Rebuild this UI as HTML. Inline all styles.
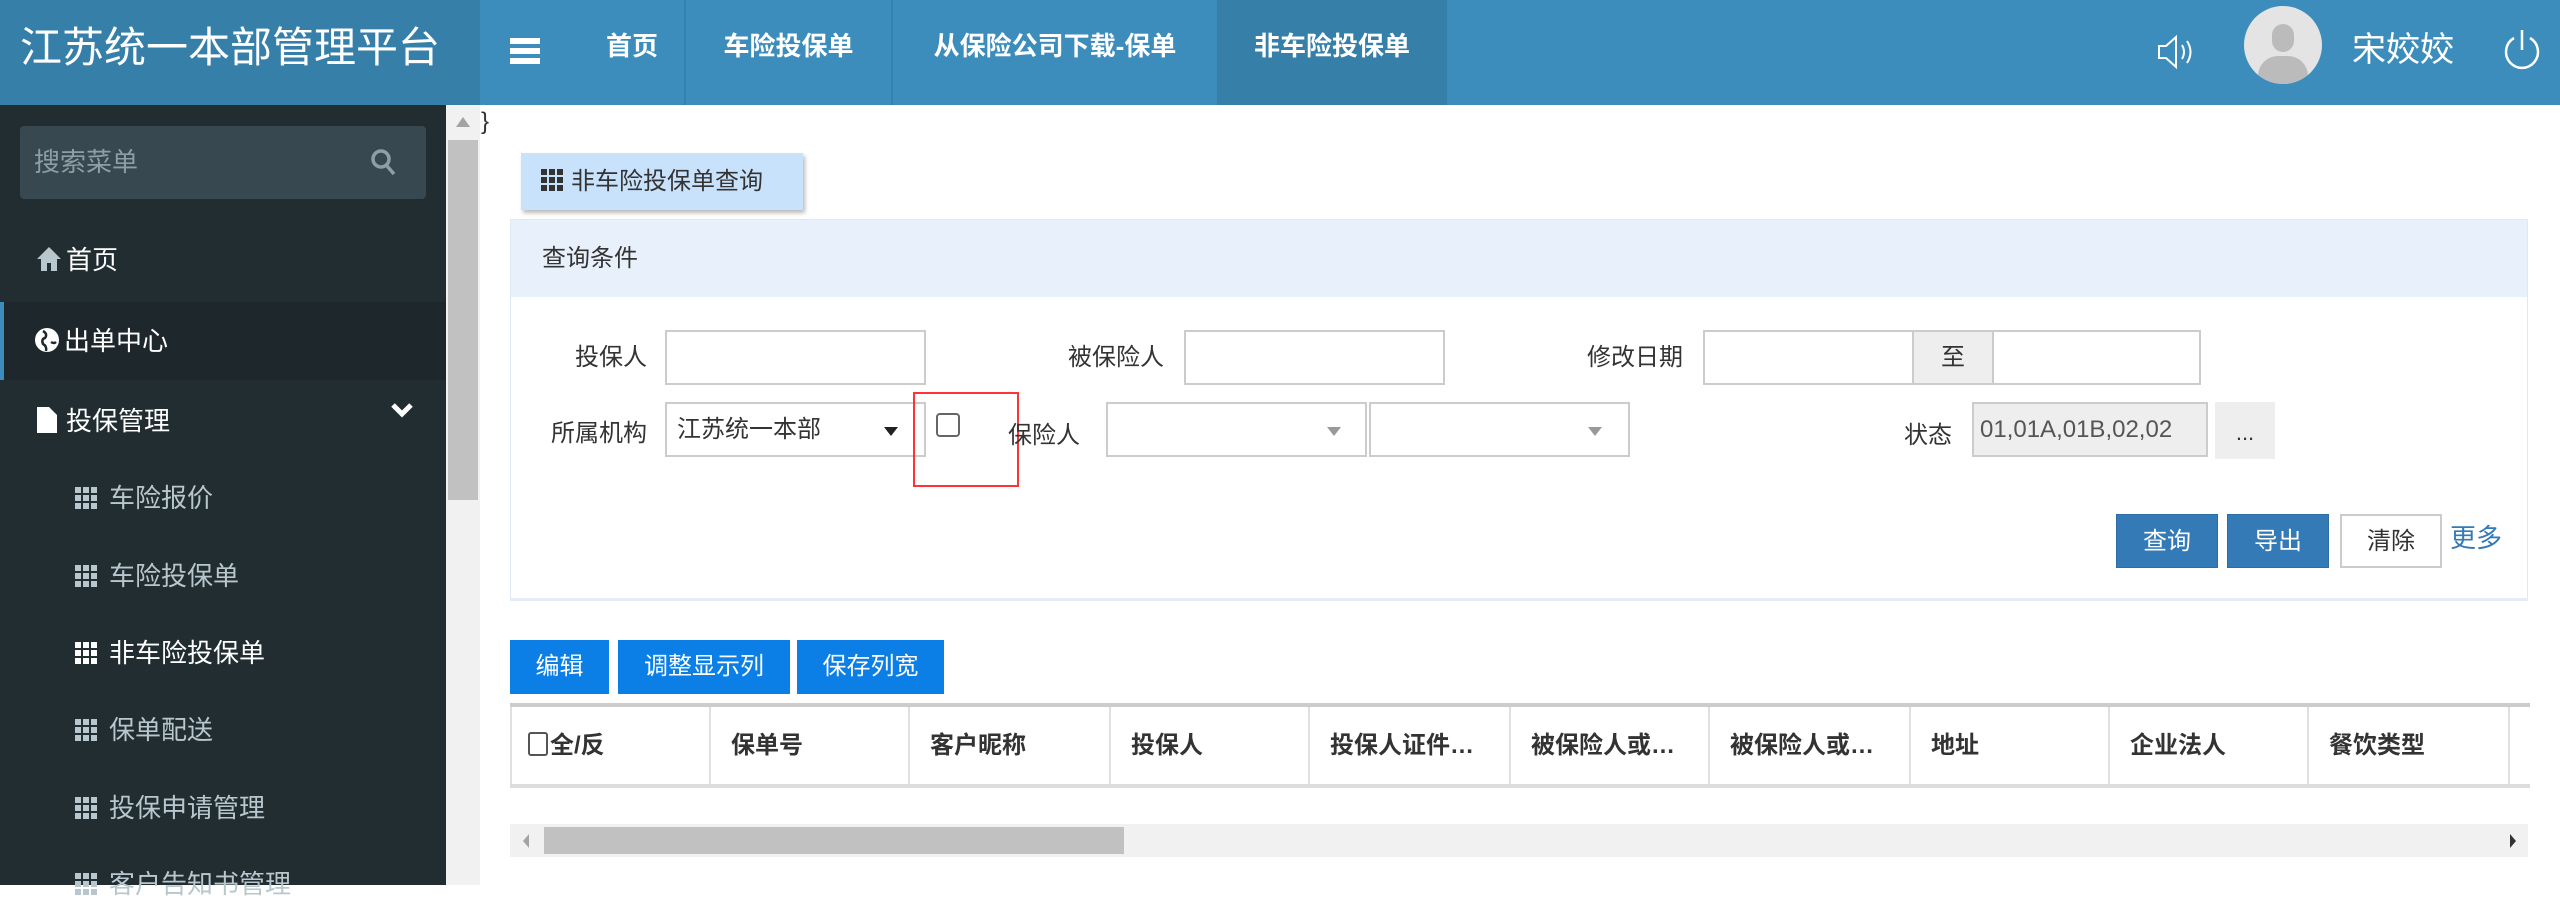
<!DOCTYPE html>
<html><head><meta charset="utf-8"><style>
*{box-sizing:border-box;margin:0;padding:0}
body{width:2560px;height:885px;overflow:hidden;background:#fff;font-family:"Liberation Sans","Noto Sans CJK SC",sans-serif;position:relative;color:#333}
.a{position:absolute}
.hdr{left:0;top:0;width:2560px;height:105px;background:#3c8dbc}
.logo{left:0;top:0;width:480px;height:105px;background:#367fa9;color:#fff;font-size:42px;line-height:95px;padding-left:20px}
.nav{top:0;height:105px;line-height:92px;color:#fff;font-size:26px;font-weight:bold;text-align:center}
.div{top:0;width:2px;height:105px;background:#3581b0}
.side{left:0;top:105px;width:446px;height:780px;background:#222d32}
.mi{left:0;width:446px;color:#fff;font-size:26px;line-height:40px}
.sub{color:#b8c7ce;font-size:26px;left:75px;line-height:40px}
.g{display:inline-block;width:22px;height:22px;vertical-align:-2px;margin-right:12px;background:
linear-gradient(90deg,currentColor 0 6px,transparent 6px 8px,currentColor 8px 14px,transparent 14px 16px,currentColor 16px 22px);
-webkit-mask:linear-gradient(currentColor 0 6px,transparent 6px 8px,currentColor 8px 14px,transparent 14px 16px,currentColor 16px 22px)}
.lbl{font-size:24px;color:#333;line-height:55px;text-align:right}
.in{border:2px solid #ccc;background:#fff;height:55px}
.btn{font-size:24px;color:#fff;text-align:center}
.th{top:707px;height:77px;border-right:2px solid #e0e0e0;font-size:24px;font-weight:bold;line-height:77px;padding-left:20px;color:#333;white-space:nowrap;overflow:hidden}
.car{width:0;height:0;border-left:7px solid transparent;border-right:7px solid transparent;border-top:9px solid #999}
</style></head><body>
<div class="a hdr"></div>
<div class="a logo">江苏统一本部管理平台</div>
<div class="a" style="left:510px;top:38px;width:30px;height:6px;background:#fff;box-shadow:0 10px 0 #fff,0 20px 0 #fff"></div>
<div class="a nav" style="left:580px;width:104px">首页</div>
<div class="a div" style="left:684px"></div>
<div class="a nav" style="left:686px;width:205px">车险投保单</div>
<div class="a div" style="left:891px"></div>
<div class="a nav" style="left:893px;width:324px">从保险公司下载-保单</div>
<div class="a nav" style="left:1217px;width:230px;background:#367fa9">非车险投保单</div>
<svg class="a" style="left:2155px;top:30px" width="44" height="44" viewBox="0 0 44 44" fill="none" stroke="#fff" stroke-width="2"><path d="M4 16h7l10-9v30l-10-9H4z"/><path d="M27 15q4 7 0 14M32 11q7 11 0 22"/></svg>
<div class="a" style="left:2244px;top:6px;width:78px;height:78px;border-radius:50%;background:#e4e4e4;overflow:hidden"><div class="a" style="left:28px;top:18px;width:22px;height:28px;border-radius:11px;background:#bbb"></div><div class="a" style="left:14px;top:50px;width:50px;height:40px;border-radius:25px;background:#bbb"></div></div>
<div class="a" style="left:2352px;top:22px;color:#fff;font-size:34px">宋姣姣</div>
<svg class="a" style="left:2500px;top:26px" width="44" height="48" viewBox="0 0 44 48" fill="none" stroke="#fff" stroke-width="2.5"><path d="M14 12A16 16 0 1 0 30 12"/><path d="M22 4v20"/></svg>

<div class="a side"></div>
<div class="a" style="left:20px;top:126px;width:406px;height:73px;background:#374850;border-radius:4px;color:#8e9ea4;font-size:26px;line-height:73px;padding-left:14px">搜索菜单</div>
<svg class="a" style="left:370px;top:148px" width="28" height="30" viewBox="0 0 28 30" fill="none" stroke="#8e9ea4" stroke-width="3.5"><circle cx="11" cy="11" r="8"/><path d="M17 18l7 8"/></svg>
<div class="a mi" style="top:240px;padding-left:36px"><span style="display:inline-block;width:0;height:0"></span><svg width="26" height="26" viewBox="0 0 26 26" style="vertical-align:-3px;margin-right:4px"><path d="M13 1L1 13h4v12h6v-8h4v8h6V13h4z" fill="#b8c7ce"/></svg>首页</div>
<div class="a" style="left:0;top:302px;width:446px;height:78px;background:#1e282c;border-left:4px solid #3c8dbc"></div>
<div class="a mi" style="top:321px;padding-left:34px"><svg width="26" height="28" viewBox="0 0 26 28" style="vertical-align:-4px;margin-right:4px"><circle cx="13" cy="14" r="12" fill="#fff"/><path d="M9 5q5 3 2 7q-4 1-2 6q4 2 3 7M17 16q3 2 5 0" stroke="#1e282c" stroke-width="2.5" fill="none"/></svg>出单中心</div>
<div class="a mi" style="top:401px;padding-left:36px"><svg width="22" height="28" viewBox="0 0 22 28" style="vertical-align:-4px;margin-right:8px"><path d="M1 1h12l8 8v18H1z" fill="#fff"/></svg>投保管理</div>
<svg class="a" style="left:390px;top:402px" width="24" height="18" viewBox="0 0 24 18"><path d="M3 3l9 9 9-9" stroke="#fff" stroke-width="5" fill="none"/></svg>
<div class="a sub" style="top:478px"><span class="g"></span>车险报价</div>
<div class="a sub" style="top:556px"><span class="g"></span>车险投保单</div>
<div class="a sub" style="top:633px;color:#fff"><span class="g"></span>非车险投保单</div>
<div class="a sub" style="top:710px"><span class="g"></span>保单配送</div>
<div class="a sub" style="top:788px"><span class="g"></span>投保申请管理</div>
<div class="a sub" style="top:864px"><span class="g"></span>客户告知书管理</div>

<div class="a" style="left:446px;top:105px;width:34px;height:780px;background:#f1f1f1"></div>
<div class="a" style="left:448px;top:140px;width:30px;height:360px;background:#c1c1c1"></div>
<div class="a" style="left:456px;top:117px;width:0;height:0;border-left:7px solid transparent;border-right:7px solid transparent;border-bottom:10px solid #a3a3a3"></div>
<div class="a" style="left:481px;top:108px;font-size:24px;color:#333">}</div>

<div class="a" style="left:521px;top:153px;width:282px;height:57px;background:#c9e2fb;box-shadow:2px 3px 4px #bbb;font-size:24px;line-height:57px;padding-left:20px;color:#333"><span class="g" style="color:#333;margin-right:8px"></span>非车险投保单查询</div>

<div class="a" style="left:510px;top:219px;width:2018px;height:382px;border:1px solid #dfe9f4;border-bottom:3px solid #e4edf7"></div>
<div class="a" style="left:511px;top:220px;width:2016px;height:77px;background:#e8f1fb;font-size:24px;line-height:77px;padding-left:31px">查询条件</div>

<div class="a lbl" style="left:540px;top:330px;width:107px">投保人</div>
<div class="a in" style="left:665px;top:330px;width:261px"></div>
<div class="a lbl" style="left:1040px;top:330px;width:124px">被保险人</div>
<div class="a in" style="left:1184px;top:330px;width:261px"></div>
<div class="a lbl" style="left:1560px;top:330px;width:123px">修改日期</div>
<div class="a in" style="left:1703px;top:330px;width:211px"></div>
<div class="a in" style="left:1912px;top:330px;width:82px;background:#eee;text-align:center;font-size:24px;line-height:51px">至</div>
<div class="a in" style="left:1992px;top:330px;width:209px"></div>

<div class="a lbl" style="left:530px;top:406px;width:117px">所属机构</div>
<div class="a in" style="left:665px;top:402px;width:261px;font-size:24px;line-height:51px;padding-left:10px">江苏统一本部</div>
<div class="a car" style="left:884px;top:427px;border-top-color:#222"></div>
<div class="a" style="left:913px;top:392px;width:106px;height:95px;border:2px solid #f33"></div>
<div class="a" style="left:936px;top:413px;width:24px;height:24px;border:2px solid #666;border-radius:4px;background:#fff"></div>
<div class="a lbl" style="left:1008px;top:408px;width:80px;text-align:left">保险人</div>
<div class="a in" style="left:1106px;top:402px;width:261px"></div>
<div class="a car" style="left:1327px;top:427px"></div>
<div class="a in" style="left:1369px;top:402px;width:261px"></div>
<div class="a car" style="left:1588px;top:427px"></div>
<div class="a lbl" style="left:1890px;top:408px;width:62px">状态</div>
<div class="a in" style="left:1972px;top:402px;width:236px;background:#eee;font-size:24px;line-height:51px;padding-left:6px;color:#555">01,01A,01B,02,02</div>
<div class="a" style="left:2215px;top:402px;width:60px;height:57px;background:#eee;text-align:center;font-size:22px;line-height:62px">...</div>

<div class="a btn" style="left:2116px;top:514px;width:102px;height:54px;background:#337ab7;border:1px solid #2e6da4;line-height:54px">查询</div>
<div class="a btn" style="left:2227px;top:514px;width:102px;height:54px;background:#337ab7;border:1px solid #2e6da4;line-height:54px">导出</div>
<div class="a btn" style="left:2340px;top:514px;width:102px;height:54px;background:#fff;border:2px solid #ccc;color:#333;line-height:52px">清除</div>
<div class="a" style="left:2450px;top:518px;font-size:26px;color:#337ab7">更多</div>

<div class="a btn" style="left:510px;top:640px;width:99px;height:54px;background:#0b7fe5;line-height:54px">编辑</div>
<div class="a btn" style="left:618px;top:640px;width:172px;height:54px;background:#0b7fe5;line-height:54px">调整显示列</div>
<div class="a btn" style="left:797px;top:640px;width:147px;height:54px;background:#0b7fe5;line-height:54px">保存列宽</div>

<div class="a" style="left:510px;top:703px;width:2020px;height:4px;background:#ccc"></div>
<div class="a" style="left:510px;top:707px;width:2px;height:77px;background:#e0e0e0"></div>
<div class="a th" style="left:512px;width:199px;padding-left:16px"><span style="display:inline-block;width:20px;height:24px;border:2px solid #555;border-radius:3px;vertical-align:-3px;margin-right:2px"></span>全/反</div>
<div class="a th" style="left:711px;width:199px">保单号</div>
<div class="a th" style="left:910px;width:201px">客户昵称</div>
<div class="a th" style="left:1111px;width:199px">投保人</div>
<div class="a th" style="left:1310px;width:201px">投保人证件…</div>
<div class="a th" style="left:1511px;width:199px">被保险人或…</div>
<div class="a th" style="left:1710px;width:201px">被保险人或…</div>
<div class="a th" style="left:1911px;width:199px">地址</div>
<div class="a th" style="left:2110px;width:199px">企业法人</div>
<div class="a th" style="left:2309px;width:201px">餐饮类型</div>
<div class="a" style="left:510px;top:784px;width:2020px;height:4px;background:#ddd"></div>

<div class="a" style="left:510px;top:824px;width:2018px;height:33px;background:#f1f1f1"></div>
<div class="a" style="left:544px;top:827px;width:580px;height:27px;background:#c1c1c1"></div>
<div class="a" style="left:523px;top:834px;width:0;height:0;border-top:7px solid transparent;border-bottom:7px solid transparent;border-right:6px solid #a3a3a3"></div>
<div class="a" style="left:2510px;top:834px;width:0;height:0;border-top:7px solid transparent;border-bottom:7px solid transparent;border-left:6px solid #333"></div>
</body></html>
